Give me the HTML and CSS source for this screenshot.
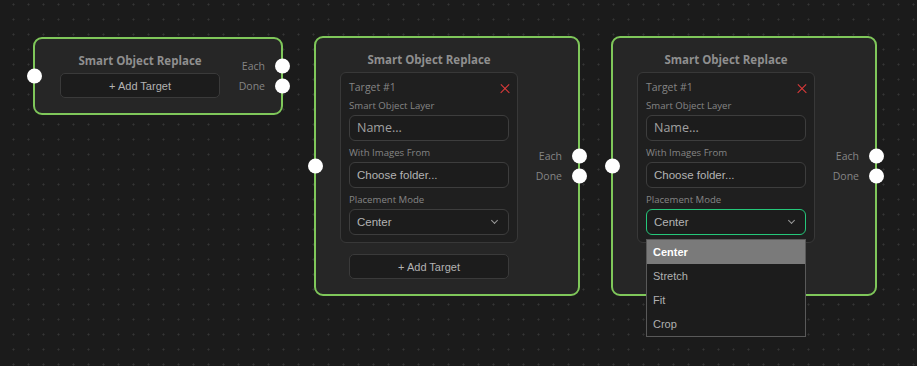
FILE: index.html
```html
<!DOCTYPE html>
<html lang="en">
<head>
    <meta charset="UTF-8">
    <meta name="viewport" content="width=device-width, initial-scale=1.0">
    <title>Smart Object Replace - Node Editor</title>
    <link rel="stylesheet" href="styles.css">
</head>
<body>
    <div class="canvas">

        <!-- collapsed node, no targets yet -->
        <div class="node node-empty">
            <span class="handle handle-in"></span>
            <div class="node-main">
                <div class="node-title">Smart Object Replace</div>
                <button class="btn-add">+ Add Target</button>
            </div>
            <div class="outputs">
                <div class="output">Each<span class="handle handle-out"></span></div>
                <div class="output">Done<span class="handle handle-out"></span></div>
            </div>
        </div>

        <!-- node with one target -->
        <div class="node node-second">
            <span class="handle handle-in"></span>
            <div class="node-main">
                <div class="node-title">Smart Object Replace</div>
                <div class="target">
                    <div class="target-head">
                        <span>Target #1</span>
                        <span class="remove"></span>
                    </div>
                    <div class="field">
                        <label>Smart Object Layer</label>
                        <input type="text" placeholder="Name...">
                    </div>
                    <div class="field">
                        <label>With Images From</label>
                        <button class="picker">Choose folder...</button>
                    </div>
                    <div class="field">
                        <label>Placement Mode</label>
                        <div class="select">Center<span class="chevron"></span></div>
                    </div>
                </div>
                <button class="btn-add btn-add-below">+ Add Target</button>
            </div>
            <div class="outputs">
                <div class="output">Each<span class="handle handle-out"></span></div>
                <div class="output">Done<span class="handle handle-out"></span></div>
            </div>
        </div>

        <!-- same node, placement dropdown open -->
        <div class="node node-third">
            <span class="handle handle-in"></span>
            <div class="node-main">
                <div class="node-title">Smart Object Replace</div>
                <div class="target">
                    <div class="target-head">
                        <span>Target #1</span>
                        <span class="remove"></span>
                    </div>
                    <div class="field">
                        <label>Smart Object Layer</label>
                        <input type="text" placeholder="Name...">
                    </div>
                    <div class="field">
                        <label>With Images From</label>
                        <button class="picker">Choose folder...</button>
                    </div>
                    <div class="field field-open">
                        <label>Placement Mode</label>
                        <div class="select select-focus">Center<span class="chevron"></span></div>
                        <ul class="dropdown">
                            <li class="active">Center</li>
                            <li>Stretch</li>
                            <li>Fit</li>
                            <li>Crop</li>
                        </ul>
                    </div>
                </div>
                <button class="btn-add btn-add-below">+ Add Target</button>
            </div>
            <div class="outputs">
                <div class="output">Each<span class="handle handle-out"></span></div>
                <div class="output">Done<span class="handle handle-out"></span></div>
            </div>
        </div>

    </div>
</body>
</html>
```

FILE: styles.css
```css
body {
    margin: 0;
    background: #1b1b1b;
    font-family: 'Open Sans', 'Noto Sans', sans-serif;
}
.canvas {
    position: relative;
    width: 917px;
    height: 366px;
    overflow: hidden;
    background-color: #1b1b1b;
    background-image: radial-gradient(circle, #343434 0.8px, transparent 1.3px);
    background-size: 15px 15px;
    background-position: 6px -3px;
}

/* nodes sit on the free canvas */
.node {
    position: absolute;
    display: flex;
    box-sizing: border-box;
    padding: 14px 16px 15px 24px;
    background: #262626;
    border: 2px solid #7fc75a;
    border-radius: 9px;
}
.node-empty {
    left: 33px;
    top: 37px;
    width: 250px;
    padding-left: 25px;
}
.node-second {
    left: 314px;
    top: 36px;
    width: 266px;
}
.node-third {
    left: 611px;
    top: 36px;
    width: 266px;
}
.node-main {
    display: flex;
    flex-direction: column;
}
.node-title {
    height: 16px;
    line-height: 16px;
    margin-bottom: 4px;
    text-align: center;
    font-size: 11.5px;
    font-weight: 700;
    color: #8f8f8f;
    white-space: nowrap;
}

.handle {
    position: absolute;
    width: 15px;
    height: 15px;
    border-radius: 50%;
    background: #fff;
}
.handle-in {
    left: -8.5px;
    top: 50%;
    transform: translateY(-50%);
}
.outputs {
    flex: 1;
    align-self: center;
    margin-top: 1px;
}
.output {
    position: relative;
    height: 20px;
    line-height: 20px;
    text-align: right;
    font-size: 10.5px;
    color: #858585;
}
.handle-out {
    right: -24.5px;
    top: 50%;
    transform: translateY(-50%);
}

.btn-add {
    width: 160px;
    height: 25px;
    padding: 0;
    background: #1c1c1c;
    border: 1px solid #3a3a3a;
    border-radius: 5px;
    color: #b3b3b3;
    font-family: 'Liberation Sans', Arial, sans-serif;
    font-size: 11px;
}
.btn-add-below {
    margin: 11px 0 0 9px;
}

.target {
    width: 178px;
    box-sizing: border-box;
    padding: 7px 8px;
    background: #1f1f1f;
    border: 1px solid #383838;
    border-radius: 6px;
}
.target-head {
    display: flex;
    justify-content: space-between;
    align-items: center;
    height: 14px;
    font-size: 10.5px;
    color: #858585;
}
.remove {
    position: relative;
    width: 10px;
    height: 10px;
    margin-right: -1px;
    margin-top: 3px;
}
.remove::before,
.remove::after {
    content: "";
    position: absolute;
    left: -1px;
    top: 4px;
    width: 12px;
    height: 1.3px;
    background: #e53b3b;
    transform: rotate(45deg);
}
.remove::after {
    transform: rotate(-45deg);
}
.field {
    margin-top: 5px;
}
.field label {
    display: block;
    height: 14px;
    line-height: 14px;
    margin-bottom: 2px;
    font-size: 9.6px;
    color: #858585;
}
.field input,
.picker,
.select {
    display: block;
    width: 160px;
    height: 26px;
    box-sizing: border-box;
    margin: 0;
    padding: 0 7px;
    background: #1c1c1c;
    border: 1px solid #3d3d3d;
    border-radius: 6px;
    color: #b3b3b3;
    font-family: 'Liberation Sans', Arial, sans-serif;
    font-size: 11.5px;
    text-align: left;
    outline: none;
}
.field input::placeholder {
    color: #a0a0a0;
    font-family: 'Open Sans', sans-serif;
    font-size: 12.5px;
}
.select {
    position: relative;
    line-height: 24px;
}
.select-focus {
    border-color: #25c77a;
}
.chevron {
    position: absolute;
    right: 11px;
    top: 8px;
    width: 4px;
    height: 4px;
    border-right: 1px solid #9a9a9a;
    border-bottom: 1px solid #9a9a9a;
    transform: rotate(45deg);
}

.field-open {
    position: relative;
}
.dropdown {
    position: absolute;
    left: 0;
    top: 46px;
    z-index: 5;
    width: 160px;
    box-sizing: border-box;
    margin: 0;
    padding: 0;
    list-style: none;
    background: #1c1c1c;
    border: 1px solid #595959;
    font-family: 'Liberation Sans', Arial, sans-serif;
    font-size: 11px;
    color: #b0b0b0;
}
.dropdown li {
    height: 24px;
    line-height: 24px;
    padding-left: 6px;
}
.dropdown li.active {
    background: #7a7a7a;
    color: #fff;
    font-weight: 700;
}
```
